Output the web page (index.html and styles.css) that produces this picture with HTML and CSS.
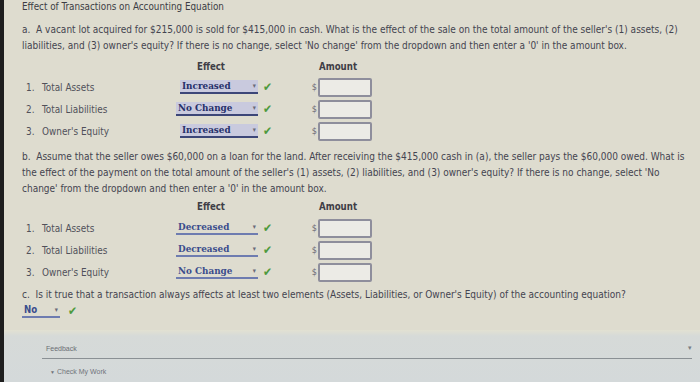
FILE: index.html
```html
<!DOCTYPE html>
<html lang="en">
<head>
  <meta charset="UTF-8">
  <title>Effect of Transactions on Accounting Equation</title>
  <link rel="stylesheet" href="styles.css">
</head>
<body>
  <div class="screen">
    <div class="page">
      <h1 class="title">Effect of Transactions on Accounting Equation</h1>

      <p class="question">a. &nbsp;A vacant lot acquired for $215,000 is sold for $415,000 in cash. What is the effect of the sale on the total amount of the seller's (1) assets, (2) liabilities, and (3) owner's equity? If there is no change, select 'No change' from the dropdown and then enter a '0' in the amount box.</p>

      <div class="table">
        <div class="row head">
          <span></span>
          <span class="col-effect">Effect</span>
          <span></span>
          <span></span>
          <span class="col-amount">Amount</span>
        </div>
        <div class="row">
          <span class="label"><span class="num">1.</span>Total Assets</span>
          <span class="pick filled narrow">Increased<i class="arrow">&#9662;</i></span>
          <span class="check">&#10004;</span>
          <span class="dollar">$</span>
          <span class="amount"></span>
        </div>
        <div class="row">
          <span class="label"><span class="num">2.</span>Total Liabilities</span>
          <span class="pick filled">No Change<i class="arrow">&#9662;</i></span>
          <span class="check">&#10004;</span>
          <span class="dollar">$</span>
          <span class="amount"></span>
        </div>
        <div class="row">
          <span class="label"><span class="num">3.</span>Owner's Equity</span>
          <span class="pick filled narrow">Increased<i class="arrow">&#9662;</i></span>
          <span class="check">&#10004;</span>
          <span class="dollar">$</span>
          <span class="amount"></span>
        </div>
      </div>

      <p class="question part-b">b. &nbsp;Assume that the seller owes $60,000 on a loan for the land. After receiving the $415,000 cash in (a), the seller pays the $60,000 owed. What is the effect of the payment on the total amount of the seller's (1) assets, (2) liabilities, and (3) owner's equity? If there is no change, select 'No change' from the dropdown and then enter a '0' in the amount box.</p>

      <div class="table table-b">
        <div class="row head">
          <span></span>
          <span class="col-effect">Effect</span>
          <span></span>
          <span></span>
          <span class="col-amount">Amount</span>
        </div>
        <div class="row">
          <span class="label"><span class="num">1.</span>Total Assets</span>
          <span class="pick">Decreased<i class="arrow">&#9662;</i></span>
          <span class="check">&#10004;</span>
          <span class="dollar">$</span>
          <span class="amount"></span>
        </div>
        <div class="row">
          <span class="label"><span class="num">2.</span>Total Liabilities</span>
          <span class="pick">Decreased<i class="arrow">&#9662;</i></span>
          <span class="check">&#10004;</span>
          <span class="dollar">$</span>
          <span class="amount"></span>
        </div>
        <div class="row">
          <span class="label"><span class="num">3.</span>Owner's Equity</span>
          <span class="pick">No Change<i class="arrow">&#9662;</i></span>
          <span class="check">&#10004;</span>
          <span class="dollar">$</span>
          <span class="amount"></span>
        </div>
      </div>

      <p class="question part-c">c. &nbsp;Is it true that a transaction always affects at least two elements (Assets, Liabilities, or Owner's Equity) of the accounting equation?</p>
      <div class="answer-c">
        <span class="pick small">No<i class="arrow">&#9662;</i></span>
        <span class="check">&#10004;</span>
      </div>
    </div>

    <div class="footer">
      <div class="feedback">
        <span>Feedback</span>
        <i class="caret">&#9662;</i>
      </div>
      <div class="check-work"><i class="tri">&#9660;</i>Check My Work</div>
    </div>
  </div>
</body>
</html>
```

FILE: styles.css
```css
body {
  margin: 0;
  background-color: #1e1e1e;
  font-family: "DejaVu Sans Condensed", "DejaVu Sans", sans-serif;
}

.screen {
  margin-left: 4px;
  width: 696px;
  height: 382px;
  background-color: #dedccf;
  overflow: hidden;
  display: flex;
  flex-direction: column;
}

.page {
  padding-left: 18px;
  padding-right: 4px;
  color: #4a4a52;
}

.title {
  margin: 0;
  padding-top: 1px;
  font-size: 9.8px;
  line-height: 12px;
  font-weight: normal;
  color: #3c3c44;
}

.question {
  margin: 9px 0 0 0;
  font-size: 10px;
  line-height: 16px;
  color: #444450;
}

.part-b {
  margin-top: 7px;
}

.part-c {
  margin-top: 4px;
}

.table {
  margin-top: 5px;
}

.table-b {
  margin-top: 2px;
}

.row {
  display: grid;
  grid-template-columns: 154px 82px 24px 36px 54px;
  align-items: center;
  height: 22px;
}

.row.head {
  height: 14px;
  margin-bottom: 3px;
  font-size: 9.6px;
  font-weight: bold;
  color: #3e3e46;
}

.table-b .row.head {
  margin-bottom: 4px;
}

.col-effect {
  text-align: center;
  padding-right: 12px;
}

.col-amount {
  text-align: center;
  margin-left: -14px;
}

.label {
  font-size: 9.9px;
  padding-left: 4px;
  color: #50505a;
}

.num {
  display: inline-block;
  width: 16px;
}

.pick {
  position: relative;
  display: block;
  height: 12px;
  line-height: 12px;
  padding-left: 2px;
  font-family: "DejaVu Serif Condensed", "DejaVu Serif", serif;
  font-size: 9.8px;
  font-weight: bold;
  color: #3a4c8c;
  border-bottom: 2px solid #6e7cb0;
}

.pick.filled {
  background-color: #c9cade;
  color: #26306a;
  border-bottom-color: #3c4678;
}

.pick.narrow {
  margin-left: 4px;
}

.arrow {
  position: absolute;
  right: 2px;
  top: 0;
  font-style: normal;
  font-size: 7px;
  color: #6a6a7a;
}

.check {
  padding-left: 5px;
  font-size: 12px;
  color: #4e9a3e;
}

.dollar {
  text-align: right;
  padding-right: 1px;
  font-size: 9px;
  color: #6a6a74;
}

.amount {
  display: block;
  height: 15px;
  border: 2px solid #8e8e9c;
  border-radius: 2px;
  background-color: #ecebe6;
}

.answer-c {
  display: flex;
  align-items: center;
  height: 16px;
}

.pick.small {
  width: 36px;
  font-family: "DejaVu Sans Condensed", "DejaVu Sans", sans-serif;
  font-size: 9.6px;
}

.answer-c .check {
  padding-left: 8px;
}

.footer {
  margin-top: auto;
  height: 52px;
  background: linear-gradient(#e2e1d2 0, #d6dad8 6px, #d4d9da 100%);
  padding-left: 38px;
  padding-right: 8px;
}

.feedback {
  margin-top: 8px;
  height: 20px;
  display: flex;
  align-items: center;
  justify-content: space-between;
  padding-left: 4px;
  border-bottom: 1px solid #8a9094;
  font-family: "Liberation Sans", sans-serif;
  font-size: 7px;
  color: #6a6e74;
}

.caret {
  font-style: normal;
  font-size: 7px;
  color: #7a7e84;
}

.check-work {
  margin-top: 9px;
  padding-left: 8px;
  font-family: "Liberation Sans", sans-serif;
  font-size: 7px;
  color: #70747a;
}

.tri {
  font-style: normal;
  font-size: 5px;
  margin-right: 2px;
}
```
